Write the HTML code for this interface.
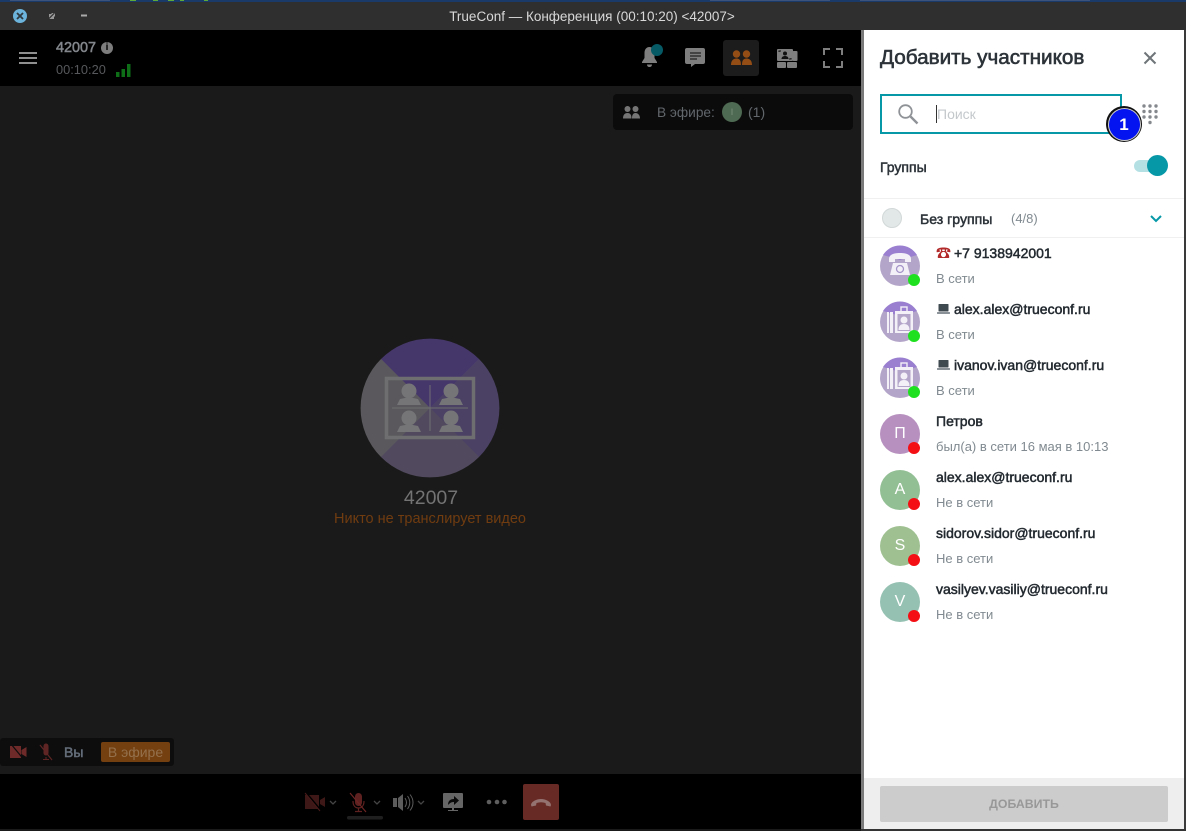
<!DOCTYPE html>
<html lang="ru">
<head>
<meta charset="utf-8">
<title>TrueConf</title>
<style>
html,body{margin:0;padding:0;width:1186px;height:831px;overflow:hidden;background:#1a1a1a;font-family:"Liberation Sans","Noto Sans CJK SC",sans-serif}
.a{position:absolute;white-space:nowrap}
svg{position:absolute;overflow:visible}
.m{-webkit-text-stroke:.5px currentColor}
.name{font-size:14px;-webkit-text-stroke:.5px currentColor;color:#232a30;line-height:16px;left:936px}
.ic{display:inline-block;width:18px;font-size:15px;-webkit-text-stroke:0;vertical-align:baseline}
.st{font-size:13px;color:#808a90;line-height:16px;left:936px}
.av{position:absolute;left:880px;width:40px;height:40px;border-radius:50%;color:#fff;font-size:16px;line-height:40px;text-align:center}
.dot{position:absolute;left:908px;width:12px;height:12px;border-radius:50%}
.on{background:#1fe01f}.off{background:#f40f14}
</style>
</head>
<body>
<div class="a" style="left:0;top:0;width:1186px;height:2px;background:#1a3a6a"></div>
<svg style="left:0;top:0" width="1186" height="2"><path d="M130 0h6v1h-6zM153 0h5v1h-5zM168 0h6v1h-6zM180 0h4v1h-4zM204 0h4v1h-4z" fill="#5fa83a"/><path d="M10 0h100v1H10zM710 0h120v1H710zM860 0h230v1H860z" fill="#8a93a6" opacity=".3"/></svg>
<div class="a" style="left:0;top:2px;width:1186px;height:28px;background:#2f2f2f"></div>
<div class="a" style="left:13px;top:9px;width:14px;height:14px;border-radius:50%;background:#6cb4dc"></div>
<svg style="left:0;top:0" width="100" height="30"><path d="M17 13l6 6M23 13l-6 6" stroke="#2f3a40" stroke-width="1.8"/><path d="M49 14h5v5h-5zM51 13h4v4" fill="#999" stroke="none"/><path d="M47.5 20l7-7" stroke="#2f2f2f" stroke-width="1.2"/><path d="M81 15.5h6" stroke="#aaa" stroke-width="2"/></svg>
<div class="a" style="left:0;width:1184px;top:9px;text-align:center;font-size:13.5px;line-height:16px;color:#d8d8d8">TrueConf — Конференция (00:10:20) &lt;42007&gt;</div>

<div class="a" style="left:0;top:30px;width:861px;height:56px;background:#000"></div>
<div class="a" style="left:19px;top:52px;width:18px;height:2px;background:#8f8f8f;box-shadow:0 5px 0 #8f8f8f,0 10px 0 #8f8f8f"></div>
<div class="a m" style="left:56px;top:39px;font-size:14.4px;line-height:18px;color:#83878c">42007</div>
<div class="a" style="left:101px;top:42px;width:12px;height:12px;border-radius:50%;background:#7d7d7d;color:#000;font-size:10px;font-weight:bold;line-height:12px;text-align:center">i</div>
<div class="a" style="left:56px;top:62px;font-size:12.8px;line-height:16px;color:#56585b">00:10:20</div>
<svg style="left:116px;top:63px" width="15" height="15"><path d="M0 9h3.5v5H0zM5.5 6h3.5v8H5.5zM11 1h3.5v13H11z" fill="#0d6e17"/></svg>

<!-- header icons -->
<svg style="left:640px;top:44px" width="20" height="26" fill="#7e7e7e"><path d="M9.5 3c-3.500 0-5 3-5 6v5l-2.500 4v1h15v-1l-2.500-4V9c0-3-1.500-6-5-6zM7 20.500h5c0 1.500-1 2.500-2.500 2.500S7 22 7 20.500z"/></svg>
<div class="a" style="left:651px;top:44px;width:12px;height:12px;border-radius:50%;background:#055a66"></div>
<svg style="left:685px;top:48px" width="20" height="20"><path d="M2 0h16a2 2 0 0 1 2 2v12a2 2 0 0 1-2 2H10l-4 3v-3H2a2 2 0 0 1-2-2V2a2 2 0 0 1 2-2z" fill="#7e7e7e"/><path d="M5 5h11M5 8h11M5 11h7" stroke="#222" stroke-width="1.3"/></svg>
<div class="a" style="left:723px;top:40px;width:36px;height:36px;border-radius:3px;background:#1c1c1c"></div>
<svg style="left:731px;top:50px" width="21" height="16" fill="#944d15"><circle cx="5.5" cy="4" r="3.700"/><circle cx="15.5" cy="4" r="3.700"/><path d="M0 15c0-4 2-6.500 5.500-6.500S10 11 10 15zM11 15c0-4 1-6.500 4.500-6.500S21 11 21 15z"/></svg>
<svg style="left:777px;top:49px" width="21" height="19"><rect x="0" y="0" width="16" height="12" rx="1" fill="#7e7e7e"/><rect x="15.5" y="2" width="5" height="10" rx="1" fill="#7e7e7e"/><rect x="0" y="13" width="9" height="6" rx="1" fill="#7e7e7e"/><rect x="10" y="13" width="10" height="6" rx="1" fill="#7e7e7e"/><circle cx="8" cy="4.500" r="2" fill="#111"/><path d="M4.500 10c0-2 1.500-3 3.500-3s3.500 1 3.500 3z" fill="#111"/><path d="M2 3V2h2M14 9v1h-2" stroke="#111" fill="none"/></svg>
<svg style="left:823px;top:48px" width="20" height="20" fill="none" stroke="#7e7e7e" stroke-width="2"><path d="M1 7V1h6M13 1h6v6M19 13v6h-6M7 19H1v-6"/></svg>

<!-- on-air pill -->
<div class="a" style="left:613px;top:94px;width:240px;height:36px;border-radius:4px;background:#0b0b0b"></div>
<svg style="left:623px;top:106px" width="17" height="13" fill="#757575"><circle cx="4.5" cy="3" r="3"/><circle cx="12.5" cy="3" r="3"/><path d="M0 12.500c0-3.500 1.500-5.500 4.500-5.500S8.500 9 8.500 12.500zM9 12.500C9 9 10 7 12.500 7s4.500 2 4.500 5.500z"/></svg>
<div class="a" style="left:657px;top:104px;font-size:13.7px;line-height:17px;color:#62676c">В эфире:</div>
<div class="a" style="left:722px;top:102px;width:20px;height:20px;border-radius:50%;background:#4e6a52;color:#7a927e;font-size:9px;line-height:20px;text-align:center">I</div>
<div class="a" style="left:748px;top:104px;font-size:14px;line-height:17px;color:#62676c">(1)</div>

<!-- center -->
<svg style="left:361px;top:339px" width="138" height="138" viewBox="0 0 138 138">
<circle cx="69" cy="69" r="69" fill="#57535f"/>
<path d="M20 20A69 69 0 0 1 118 20L69 69z" fill="#46376a"/>
<path d="M118 20A69 69 0 0 1 118 118L69 69z" fill="#4b4164"/>
<path d="M20 20A69 69 0 0 0 20 118L69 69z" fill="#5a585c"/>
<path d="M20 118A69 69 0 0 0 118 118L69 69z" fill="#514a5e"/>
<rect x="25.5" y="39.5" width="87" height="59" fill="none" stroke="#6e6e71" stroke-width="3.500"/>
<path d="M69 46v46M31 69h76" stroke="#6e6e71" stroke-width="1"/>
<g fill="#757577">
<circle cx="48" cy="52" r="7.500"/><path d="M36 66l3-6 5-1h8l5 1 3 6z"/>
<circle cx="90" cy="52" r="7.500"/><path d="M78 66l3-6 5-1h8l5 1 3 6z"/>
<circle cx="48" cy="79" r="7.500"/><path d="M36 93l3-6 5-1h8l5 1 3 6z"/>
<circle cx="90" cy="79" r="7.500"/><path d="M78 93l3-6 5-1h8l5 1 3 6z"/>
</g>
</svg>
<div class="a" style="left:331px;width:200px;top:487px;text-align:center;font-size:19.5px;line-height:22px;color:#737373">42007</div>
<div class="a" style="left:300px;width:260px;top:511px;text-align:center;font-size:14.5px;line-height:17px;color:#703c10">Никто не транслирует видео</div>

<!-- self pill -->
<div class="a" style="left:0;top:738px;width:174px;height:28px;border-radius:3px;background:#0d0d0d"></div>
<svg style="left:10px;top:744px" width="48" height="18"><path d="M0 2h11v12H0zM11.5 6l5-3v10l-5-3z" fill="#6e2a29"/><path d="M1 0l14 17" stroke="#0d0d0d" stroke-width="1.2"/><path d="M33.500 2a2.500 2.500 0 0 1 5 0v7a2.500 2.500 0 0 1-5 0z" fill="#5e2524"/><path d="M36 13v2M33 15.500h6" stroke="#5e2524"/><path d="M30 1l12 15" stroke="#5e2524" stroke-width="1.200"/></svg>
<div class="a m" style="left:64px;top:744px;font-size:14px;line-height:17px;color:#646e7a">Вы</div>
<div class="a" style="left:101px;top:742px;width:69px;height:20px;border-radius:2px;background:#744010;color:#94704c;font-size:14px;line-height:20px;text-align:center">В эфире</div>

<!-- bottom bar -->
<div class="a" style="left:0;top:774px;width:861px;height:55px;background:#000"></div>
<svg style="left:290px;top:770px" width="280" height="61">
<path d="M15 25h14v14H15zM30 30l5-3v10l-5-3z" fill="#3e1817"/><path d="M16 23l15 18" stroke="#000" stroke-width="2.200"/><path d="M15 23l15 18" stroke="#4a1b1a" stroke-width="1"/>
<path d="M40 31l3 3 3-3" fill="none" stroke="#444" stroke-width="1.300"/>
<rect x="65" y="23" width="7" height="13" rx="3.500" fill="#5e2120"/><path d="M63 31c0 5 2.500 7 5.500 7s5.500-2 5.500-7M68.500 38v3M65 41.500h7" fill="none" stroke="#5e2120" stroke-width="1.200"/><path d="M60 23l16 19" stroke="#6e2524" stroke-width="1.200"/>
<path d="M84 31l3 3 3-3" fill="none" stroke="#444" stroke-width="1.300"/>
<path d="M103 28h4v9h-4zM108 28l5-4v17l-5-4z" fill="#5c5c5c"/><path d="M115 28c2 3 2 6 0 9M117.500 26c3 4 3 9 0 13M120 24.500c4 5 4 11 0 16" fill="none" stroke="#5c5c5c" stroke-width="1"/>
<path d="M128 31l3 3 3-3" fill="none" stroke="#444" stroke-width="1.300"/>
<path d="M154 23h18a1 1 0 0 1 1 1v13a1 1 0 0 1-1 1h-8v2h4v1h-10v-1h4v-2h-8a1 1 0 0 1-1-1V24a1 1 0 0 1 1-1z" fill="#666"/><path d="M158 35c0-4 2-6 6-6v-3l5 4.500-5 4.500v-3c-3 0-4 1-6 3z" fill="#0a0a0a"/>
<circle cx="199" cy="32" r="2.300" fill="#5e5e5e"/><circle cx="207" cy="32" r="2.300" fill="#5e5e5e"/><circle cx="214.500" cy="32" r="2.300" fill="#5e5e5e"/>
<rect x="233" y="14" width="36" height="36" rx="2" fill="#682a25"/>
<path d="M241 35c0-3 5-6 10-6s10 3 10 6l-.5 1.500-4.500-1-.5-2.500c-3-1-6-1-9 0l-.5 2.500-4.500 1z" fill="#947270"/>
<rect x="57" y="46" width="36" height="3.500" rx="1.700" fill="#1f1f1f"/>
</svg>

<!-- divider / panel -->
<div class="a" style="left:861px;top:30px;width:3px;height:801px;background:#7a7a7a"></div>
<div class="a" style="left:864px;top:30px;width:320px;height:799px;background:#fff"></div>
<div class="a" style="left:1184px;top:30px;width:2px;height:801px;background:#3a3a3a"></div>
<div class="a" style="left:861px;top:829px;width:325px;height:2px;background:#333"></div>

<div class="a" style="left:880px;top:46px;font-size:20.7px;-webkit-text-stroke:.6px #2c3339;line-height:24px;color:#2c3339">Добавить участников</div>
<svg style="left:1144px;top:52px" width="12" height="12"><path d="M.5.5l11 11M11.500.5l-11 11" stroke="#6e7478" stroke-width="2"/></svg>

<div class="a" style="left:880px;top:94px;width:238px;height:36px;border:2px solid #0798a8;background:#fff"></div>
<svg style="left:898px;top:104px" width="22" height="22" fill="none" stroke="#8f9397" stroke-width="1.800"><circle cx="7.500" cy="7.500" r="6.300"/><path d="M12.500 12.500l7 7" stroke-width="2.400"/></svg>
<div class="a" style="left:936px;top:105px;width:1px;height:18px;background:#333"></div>
<div class="a" style="left:937px;top:106px;font-size:14px;line-height:17px;color:#c4c8cb">Поиск</div>
<svg style="left:1144px;top:106px" width="13" height="18" fill="#85898d"><circle cx="0" cy="0" r="1.700"/><circle cx="6" cy="0" r="1.700"/><circle cx="12" cy="0" r="1.700"/><circle cx="0" cy="5.500" r="1.700"/><circle cx="6" cy="5.500" r="1.700"/><circle cx="12" cy="5.500" r="1.700"/><circle cx="0" cy="11" r="1.700"/><circle cx="6" cy="11" r="1.700"/><circle cx="12" cy="11" r="1.700"/><circle cx="6" cy="16.500" r="1.700"/></svg>
<div class="a" style="left:1106px;top:106px;width:36px;height:36px;border-radius:50%;background:#111"></div>
<div class="a" style="left:1107.5px;top:107.5px;width:33px;height:33px;border-radius:50%;background:#cfcfcf"></div>
<div class="a" style="left:1108.5px;top:108.5px;width:31px;height:31px;border-radius:50%;background:#0414f0;color:#fff;font-size:17px;font-weight:bold;line-height:31px;text-align:center">1</div>

<div class="a m" style="left:880px;top:159px;font-size:14px;line-height:16px;color:#2c3339">Группы</div>
<div class="a" style="left:1134px;top:160px;width:26px;height:12px;border-radius:6px;background:#b4e0e4"></div>
<div class="a" style="left:1147px;top:155px;width:21px;height:21px;border-radius:50%;background:#0798a8"></div>

<div class="a" style="left:864px;top:198px;width:320px;height:1px;background:#f0f0f0"></div>
<div class="a" style="left:864px;top:237px;width:320px;height:1px;background:#f0f0f0"></div>
<div class="a" style="left:882px;top:208px;width:18px;height:18px;border:1px solid #d2d8d8;border-radius:50%;background:#e2e7e7"></div>
<div class="a m" style="left:920px;top:211px;font-size:14.1px;line-height:16px;color:#2c3339">Без группы</div>
<div class="a" style="left:1011px;top:211px;font-size:13px;line-height:16px;color:#808a90">(4/8)</div>
<svg style="left:1150px;top:215px" width="12" height="8"><path d="M1 1l5 5 5-5" fill="none" stroke="#0798a8" stroke-width="2"/></svg>

<!-- rows -->
<svg style="left:880px;top:246px" width="40" height="40" viewBox="0 0 40 40"><circle cx="20" cy="20" r="20" fill="#b3a5c9"/><path d="M3 9A20 20 0 0 1 37 9L20 14z" fill="#9a7fd0"/><path d="M9 13c0-4 4-6 11-6s11 2 11 6v3h-6v-3H15v3H9z" fill="#f3f0f8"/><path d="M13 17h14l3 12H10z" fill="#f3f0f8"/><circle cx="20" cy="23" r="3.500" fill="none" stroke="#a594c8" stroke-width="1.300"/></svg>
<div class="dot on" style="top:274px"></div>
<div class="a name" style="top:245px"><span class="ic" style="color:#b22a2a">☎</span>+7 9138942001</div>
<div class="a st" style="top:271px">В сети</div>

<svg style="left:880px;top:302px" width="40" height="40" viewBox="0 0 40 40"><circle cx="20" cy="20" r="20" fill="#b3a5c9"/><path d="M3 9A20 20 0 0 1 37 9L20 14z" fill="#9a7fd0"/><path d="M7 10h2v21H7zM10 10h3v21h-3z" fill="#f3f0f8"/><rect x="15" y="9" width="18" height="22" fill="#f3f0f8"/><rect x="21" y="5" width="6" height="5" fill="none" stroke="#f3f0f8" stroke-width="1.400"/><rect x="17.5" y="12" width="13" height="17" fill="#b3a5c9"/><circle cx="24" cy="18" r="3.500" fill="#f3f0f8"/><path d="M18.500 28c0-4 2-6 5.500-6s5.500 2 5.500 6z" fill="#f3f0f8"/></svg>
<svg style="left:937px;top:304px" width="13" height="10"><rect x="1.500" y="0" width="10" height="7.500" rx=".5" fill="#3f4a50"/><rect x="0" y="8" width="13" height="2" rx=".5" fill="#8a9298"/></svg>
<div class="dot on" style="top:330px"></div>
<div class="a name" style="top:301px;left:954px">alex.alex@trueconf.ru</div>
<div class="a st" style="top:327px">В сети</div>

<svg style="left:880px;top:358px" width="40" height="40" viewBox="0 0 40 40"><circle cx="20" cy="20" r="20" fill="#b3a5c9"/><path d="M3 9A20 20 0 0 1 37 9L20 14z" fill="#9a7fd0"/><path d="M7 10h2v21H7zM10 10h3v21h-3z" fill="#f3f0f8"/><rect x="15" y="9" width="18" height="22" fill="#f3f0f8"/><rect x="21" y="5" width="6" height="5" fill="none" stroke="#f3f0f8" stroke-width="1.400"/><rect x="17.5" y="12" width="13" height="17" fill="#b3a5c9"/><circle cx="24" cy="18" r="3.500" fill="#f3f0f8"/><path d="M18.500 28c0-4 2-6 5.500-6s5.500 2 5.500 6z" fill="#f3f0f8"/></svg>
<svg style="left:937px;top:360px" width="13" height="10"><rect x="1.500" y="0" width="10" height="7.500" rx=".5" fill="#3f4a50"/><rect x="0" y="8" width="13" height="2" rx=".5" fill="#8a9298"/></svg>
<div class="dot on" style="top:386px"></div>
<div class="a name" style="top:357px;left:954px">ivanov.ivan@trueconf.ru</div>
<div class="a st" style="top:383px">В сети</div>

<div class="av" style="top:414px;background:#b790bf">П</div>
<div class="dot off" style="top:442px"></div>
<div class="a name" style="top:413px">Петров</div>
<div class="a st" style="top:439px">был(а) в сети 16 мая в 10:13</div>

<div class="av" style="top:470px;background:#93bf95">A</div>
<div class="dot off" style="top:498px"></div>
<div class="a name" style="top:469px">alex.alex@trueconf.ru</div>
<div class="a st" style="top:495px">Не в сети</div>

<div class="av" style="top:526px;background:#9fc192">S</div>
<div class="dot off" style="top:554px"></div>
<div class="a name" style="top:525px">sidorov.sidor@trueconf.ru</div>
<div class="a st" style="top:551px">Не в сети</div>

<div class="av" style="top:582px;background:#95c1b3">V</div>
<div class="dot off" style="top:610px"></div>
<div class="a name" style="top:581px">vasilyev.vasiliy@trueconf.ru</div>
<div class="a st" style="top:607px">Не в сети</div>

<!-- footer -->
<div class="a" style="left:864px;top:778px;width:320px;height:51px;background:#eeeeee"></div>
<div class="a" style="left:880px;top:786px;width:288px;height:36px;border-radius:2px;background:#cccccc;color:#989898;font-size:12.3px;font-weight:bold;line-height:36px;text-align:center">ДОБАВИТЬ</div>
</body>
</html>
